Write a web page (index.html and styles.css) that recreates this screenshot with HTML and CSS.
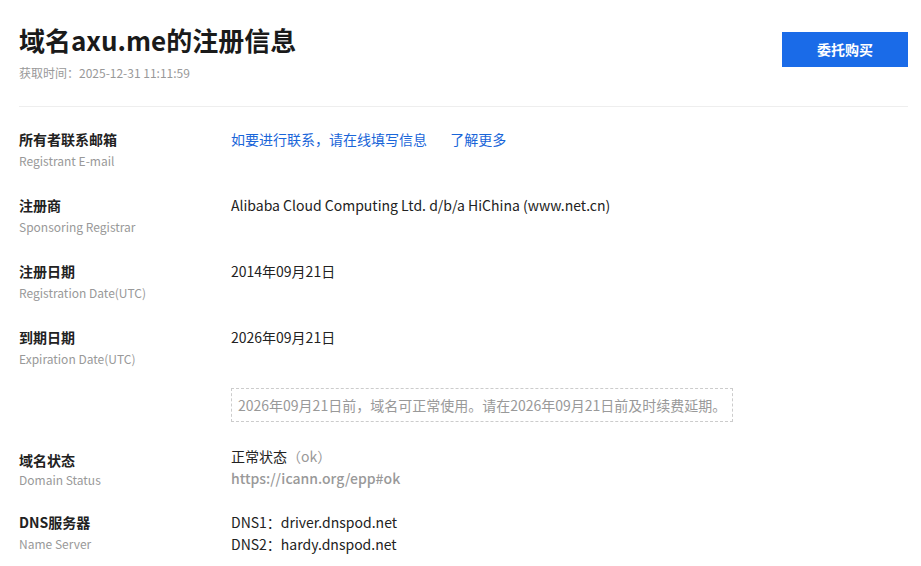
FILE: index.html
```html
<!doctype html>
<html lang="zh-CN">
  <head>
    <meta charset="UTF-8" />
    <meta name="viewport" content="width=device-width, initial-scale=1.0" />
    <title>域名axu.me的注册信息</title>
    <link rel="stylesheet" href="styles.css">
  </head>
  <body>
    <div class="whois">
      <div class="whois-header">
        <div class="whois-title">
          <h1>域名axu.me的注册信息</h1>
          <p class="fetch-time">获取时间：2025-12-31 11:11:59</p>
        </div>
        <a class="btn-buy" href="#">委托购买</a>
      </div>

      <div class="whois-list">
        <div class="row">
          <div class="label">
            <strong>所有者联系邮箱</strong>
            <span>Registrant E-mail</span>
          </div>
          <div class="value">
            <a href="#" class="link">如要进行联系，请在线填写信息</a>
            <a href="#" class="link more">了解更多</a>
          </div>
        </div>

        <div class="row">
          <div class="label">
            <strong>注册商</strong>
            <span>Sponsoring Registrar</span>
          </div>
          <div class="value">Alibaba Cloud Computing Ltd. d/b/a HiChina (www.net.cn)</div>
        </div>

        <div class="row">
          <div class="label">
            <strong>注册日期</strong>
            <span>Registration Date(UTC)</span>
          </div>
          <div class="value">2014年09月21日</div>
        </div>

        <div class="row">
          <div class="label">
            <strong>到期日期</strong>
            <span>Expiration Date(UTC)</span>
          </div>
          <div class="value">2026年09月21日</div>
        </div>

        <div class="notice">2026年09月21日前，域名可正常使用。请在2026年09月21日前及时续费延期。</div>

        <div class="row row-status">
          <div class="label">
            <strong>域名状态</strong>
            <span>Domain Status</span>
          </div>
          <div class="value">
            <div>正常状态<span class="muted">（ok）</span></div>
            <a href="#" class="status-link">https://icann.org/epp#ok</a>
          </div>
        </div>

        <div class="row">
          <div class="label">
            <strong>DNS服务器</strong>
            <span>Name Server</span>
          </div>
          <div class="value">
            <div>DNS1：driver.dnspod.net</div>
            <div>DNS2：hardy.dnspod.net</div>
          </div>
        </div>
      </div>
    </div>
  </body>
</html>
```

FILE: styles.css
```css
body {
  margin: 0;
  font-family: "Noto Sans CJK SC", "Noto Sans", sans-serif;
  color: #222;
  background: #fff;
}
a {
  text-decoration: none;
}
.whois {
  width: 889px;
  margin-left: 19px;
}
.whois-header {
  display: flex;
  justify-content: space-between;
  align-items: flex-start;
  padding-top: 22px;
  padding-bottom: 24px;
  border-bottom: 1px solid #eee;
}
.whois-title h1 {
  margin: 0;
  font-size: 26px;
  line-height: 36px;
  font-weight: 700;
  color: #1a1a1a;
}
.fetch-time {
  margin: 6px 0 0;
  font-size: 12px;
  line-height: 18px;
  color: #999;
}
.btn-buy {
  display: block;
  margin-top: 10px;
  width: 126px;
  height: 35px;
  line-height: 35px;
  text-align: center;
  background: #1a6be8;
  color: #fff;
  font-size: 14px;
  font-weight: 700;
}
.whois-list {
  padding-top: 21px;
}
.row {
  display: flex;
  margin-bottom: 22px;
}
.label {
  width: 212px;
  flex-shrink: 0;
  display: flex;
  flex-direction: column;
}
.label strong {
  font-size: 14px;
  line-height: 22px;
  font-weight: 700;
  color: #222;
}
.label span {
  font-size: 12px;
  line-height: 22px;
  color: #999;
}
.value {
  font-size: 14px;
  line-height: 22px;
  color: #222;
}
.link {
  color: #1a66d9;
}
.link.more {
  margin-left: 20px;
}
.notice {
  display: inline-block;
  margin: -7px 0 23px 212px;
  padding: 5px 6px;
  border: 1px dashed #ccc;
  font-size: 14px;
  line-height: 22px;
  color: #999;
}
.row-status .label {
  padding-top: 4px;
}
.row-status .label span {
  line-height: 18px;
}
.muted {
  color: #999;
}
.status-link {
  display: block;
  color: #999;
  font-weight: 500;
}
```
